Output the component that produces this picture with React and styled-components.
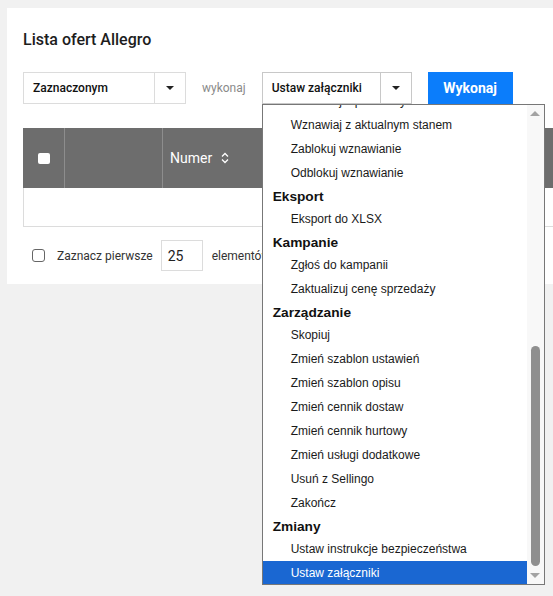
import React, { useLayoutEffect, useRef } from 'react';
import styled, { createGlobalStyle } from 'styled-components';

const Global = createGlobalStyle`
  html, body { margin: 0; padding: 0; background: #f1f1f1; overflow: hidden; }
  body { font-family: Roboto, "Liberation Sans", Arial, sans-serif; color: #222; }
  * { box-sizing: border-box; }
`;

const Page = styled.div`
  width: 553px;
  height: 596px;
  padding: 8px 0 0 7px;
  overflow: hidden;
`;

const Card = styled.section`
  width: 720px;
  background: #fff;
  padding: 22px 16px 13px;
`;

const Title = styled.h1`
  margin: 0;
  font-size: 16px;
  line-height: 20px;
  font-weight: 500;
  color: #1d1d1d;
`;

const Controls = styled.div`
  display: flex;
  align-items: center;
  margin-top: 22px;
  height: 32px;
`;

const SelectWrap = styled.div`
  position: relative;
  display: flex;
  width: ${p => p.$w}px;
  height: 32px;
  border: 1px solid ${p => (p.$open ? '#c8c8c8' : '#dcdcdc')};
  background: #fff;
`;

const SelectLabel = styled.div`
  flex: 1;
  padding-left: 9px;
  font-size: 12px;
  font-weight: 500;
  line-height: 30px;
  color: #111;
  white-space: nowrap;
`;

const SelectArrow = styled.div`
  width: 31px;
  border-left: 1px solid ${p => (p.$open ? '#c8c8c8' : '#dcdcdc')};
  display: flex;
  align-items: center;
  justify-content: center;
  &::after {
    content: '';
    border-left: 4px solid transparent;
    border-right: 4px solid transparent;
    border-top: 4px solid #222;
  }
`;

const Muted = styled.span`
  margin: 0 16px 0 16px;
  font-size: 12px;
  color: #8a8a8a;
`;

const Button = styled.button`
  margin-left: 16px;
  width: 85px;
  height: 32px;
  border: none;
  background: #0b7dfb;
  color: #fff;
  font-family: Roboto, sans-serif;
  font-size: 14px;
  font-weight: 700;
  padding: 0;
`;

const Table = styled.div`
  margin-top: 24px;
`;

const HeadRow = styled.div`
  display: grid;
  grid-template-columns: 42px 98px 1fr;
  height: 60px;
  background: #6d6d6d;
`;

const HeadCell = styled.div`
  display: flex;
  align-items: center;
  justify-content: ${p => (p.$center ? 'center' : 'flex-start')};
  padding-left: ${p => (p.$center ? 0 : 7)}px;
  border-right: 1px solid #8d8d8d;
  color: #fff;
  font-size: 14px;
  &:last-child { border-right: none; }
`;

const HeadCheck = styled.span`
  width: 12px;
  height: 11px;
  background: #fff;
  border-radius: 2px;
`;

const SortIcon = styled.svg`
  margin-left: 9px;
`;

const BodyRow = styled.div`
  height: 39px;
  border: 1px solid #dcdcdc;
  border-top: none;
`;

const Footer = styled.div`
  display: flex;
  align-items: center;
  margin-top: 13px;
  height: 31px;
  font-size: 12px;
  color: #333;
`;

const Check = styled.span`
  width: 13px;
  height: 13px;
  margin-left: 9px;
  border: 1px solid #666;
  border-radius: 3px;
`;

const FooterLabel = styled.span`
  margin-left: 12px;
`;

const NumInput = styled.div`
  margin: 0 9px 0 8px;
  width: 42px;
  height: 31px;
  border: 1px solid #dcdcdc;
  padding-left: 6px;
  font-size: 14px;
  line-height: 30px;
  color: #222;
`;

const Dropdown = styled.div`
  position: absolute;
  top: calc(100% + 1px);
  left: -1px;
  width: 283px;
  height: 481px;
  border: 1px solid #777;
  background: #fff;
  display: flex;
  z-index: 10;
  font-family: "Liberation Sans", Arial, sans-serif;
  font-size: 12px;
  color: #1a1a1a;
`;

const List = styled.div`
  flex: 1;
  overflow: hidden;
`;

const Group = styled.div`
  height: 22px;
  line-height: 23px;
  padding-left: 10px;
  font-size: 13.7px;
  font-weight: 700;
  color: #111;
`;

const Option = styled.div`
  height: 24px;
  line-height: 24px;
  padding-left: 28px;
  white-space: nowrap;
  background: ${p => (p.$selected ? '#1a67d2' : 'transparent')};
  color: ${p => (p.$selected ? '#fff' : '#1a1a1a')};
`;

const ScrollBar = styled.div`
  width: 17px;
  background: #f8f8f8;
  display: flex;
  flex-direction: column;
`;

const ScrollArrow = styled.div`
  height: 17px;
  display: flex;
  align-items: center;
  justify-content: center;
  &::after {
    content: '';
    border-left: 5px solid transparent;
    border-right: 5px solid transparent;
    ${p => (p.$down ? 'border-top' : 'border-bottom')}: 5px solid #a3a3a3;
  }
`;

const Track = styled.div`
  flex: 1;
  display: flex;
  flex-direction: column;
  justify-content: flex-end;
  align-items: center;
  padding-bottom: 1px;
`;

const Thumb = styled.div`
  width: 9px;
  height: 220px;
  border-radius: 5px;
  background: #8f8f8f;
`;

const groups = [
  { label: null, items: ['Wznawiaj z pierwotnym stanem', 'Wznawiaj z aktualnym stanem', 'Zablokuj wznawianie', 'Odblokuj wznawianie'] },
  { label: 'Eksport', items: ['Eksport do XLSX'] },
  { label: 'Kampanie', items: ['Zgłoś do kampanii', 'Zaktualizuj cenę sprzedaży'] },
  {
    label: 'Zarządzanie',
    items: [
      'Skopiuj',
      'Zmień szablon ustawień',
      'Zmień szablon opisu',
      'Zmień cennik dostaw',
      'Zmień cennik hurtowy',
      'Zmień usługi dodatkowe',
      'Usuń z Sellingo',
      'Zakończ',
    ],
  },
  { label: 'Zmiany', items: ['Ustaw instrukcje bezpieczeństwa', 'Ustaw załączniki'] },
];

function OptionsList() {
  const ref = useRef(null);
  useLayoutEffect(() => {
    if (ref.current) ref.current.scrollTop = 16;
  }, []);
  return (
    <Dropdown>
      <List ref={ref}>
        {groups.map((g, i) => (
          <React.Fragment key={i}>
            {g.label && <Group>{g.label}</Group>}
            {g.items.map(it => (
              <Option key={it} $selected={it === 'Ustaw załączniki'}>
                {it}
              </Option>
            ))}
          </React.Fragment>
        ))}
      </List>
      <ScrollBar>
        <ScrollArrow />
        <Track>
          <Thumb />
        </Track>
        <ScrollArrow $down />
      </ScrollBar>
    </Dropdown>
  );
}

export default function App() {
  return (
    <>
      <Global />
      <Page>
        <Card>
          <Title>Lista ofert Allegro</Title>
          <Controls>
            <SelectWrap $w={163}>
              <SelectLabel>Zaznaczonym</SelectLabel>
              <SelectArrow />
            </SelectWrap>
            <Muted>wykonaj</Muted>
            <SelectWrap $w={150} $open>
              <SelectLabel>Ustaw załączniki</SelectLabel>
              <SelectArrow $open />
              <OptionsList />
            </SelectWrap>
            <Button>Wykonaj</Button>
          </Controls>
          <Table>
            <HeadRow>
              <HeadCell $center>
                <HeadCheck />
              </HeadCell>
              <HeadCell />
              <HeadCell>
                Numer
                <SortIcon width="8" height="12" viewBox="0 0 8 12" fill="none" stroke="#fff" strokeWidth="1.3">
                  <path d="M1 4.5 L4 1.5 L7 4.5" />
                  <path d="M1 7.5 L4 10.5 L7 7.5" />
                </SortIcon>
              </HeadCell>
            </HeadRow>
            <BodyRow />
          </Table>
          <Footer>
            <Check />
            <FooterLabel>Zaznacz pierwsze</FooterLabel>
            <NumInput>25</NumInput>
            <span>elementów</span>
          </Footer>
        </Card>
      </Page>
    </>
  );
}
